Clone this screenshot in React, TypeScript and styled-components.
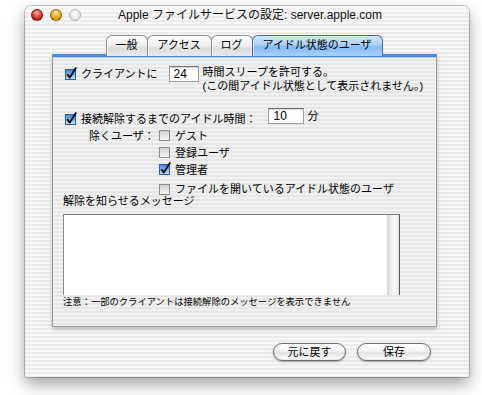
import React from "react";
import styled, { createGlobalStyle } from "styled-components";

const stripes = (a: string, b: string) =>
  `repeating-linear-gradient(to bottom, ${a} 0px, ${a} 2px, ${b} 2px, ${b} 4px)`;

const GlobalStyle = createGlobalStyle`
  html, body { margin: 0; padding: 0; background: #ffffff; }
  body {
    font-family: "Liberation Sans", "Noto Sans CJK JP", sans-serif;
    color: #000;
    -webkit-font-smoothing: antialiased;
  }
`;

const Page = styled.div`
  width: 482px;
  height: 395px;
  box-sizing: border-box;
  padding: 6px 0 0 25px;
  background: #fff;
`;

const Window = styled.div`
  width: 444px;
  height: 371px;
  display: flex;
  flex-direction: column;
  background: ${stripes("#f7f7f7", "#ebebeb")};
  border-radius: 6px 6px 2px 2px;
  box-shadow: 0 0 0 1px rgba(0, 0, 0, 0.22), 0 7px 16px rgba(0, 0, 0, 0.38);
`;

const TitleBar = styled.div`
  height: 22px;
  box-sizing: border-box;
  padding-bottom: 4px;
  display: grid;
  grid-template-columns: 70px 1fr 64px;
  align-items: center;
  background: linear-gradient(to bottom, rgba(255,255,255,0.7), rgba(255,255,255,0) 40%), ${stripes("#f7f7f7", "#ebebeb")};
  border-radius: 6px 6px 0 0;
`;

const Lights = styled.div`
  display: flex;
  gap: 7px;
  padding-left: 6px;
`;

const Light = styled.span<{ $c: "red" | "yellow" | "grey" }>`
  width: 12px;
  height: 12px;
  border-radius: 50%;
  box-sizing: border-box;
  background: ${(p) =>
    p.$c === "red"
      ? "radial-gradient(circle at 50% 30%, #ffd0c8 0, #f0625a 30%, #b51d17 75%, #8a120e 100%)"
      : p.$c === "yellow"
      ? "radial-gradient(circle at 50% 30%, #fff2c0 0, #f6bb38 35%, #d98a0b 80%, #b56d05 100%)"
      : "radial-gradient(circle at 50% 35%, #ffffff 0, #f0f0f0 40%, #d2d2d2 100%)"};
  border: 1px solid ${(p) => (p.$c === "grey" ? "#b5b5b5" : "rgba(0,0,0,0.35)")};
`;

const Title = styled.div`
  text-align: center;
  font-size: 12px;
  line-height: 14px;
  white-space: nowrap;
  color: #111;
`;

const Body = styled.div`
  flex: 1;
  display: flex;
  flex-direction: column;
  padding: 7px 32px 0 27px;
`;

const TabBar = styled.div`
  display: flex;
  justify-content: center;
  height: 20px;
  position: relative;
  z-index: 1;
  margin-bottom: -1px;
`;

const Tab = styled.div<{ $w: number; $active?: boolean }>`
  width: ${(p) => p.$w}px;
  height: 21px;
  box-sizing: border-box;
  display: flex;
  align-items: center;
  justify-content: center;
  font-size: 11px;
  line-height: 12px;
  padding-bottom: 2px;
  border: 1px solid ${(p) => (p.$active ? "#3f6fb6" : "#8f8f8f")};
  border-bottom: none;
  border-radius: 6px 6px 0 0;
  margin-left: -1px;
  background: ${(p) =>
    p.$active
      ? "linear-gradient(to bottom, #d4e8fc 0%, #a9cff6 45%, #86bbf2 55%, #a6d0f8 100%)"
      : "linear-gradient(to bottom, #fdfdfd 0%, #eeeeee 50%, #dcdcdc 60%, #e9e9e9 100%)"};
  box-shadow: inset 1px 0 0 rgba(255,255,255,0.6);
`;

const Pane = styled.div`
  height: 273px;
  box-sizing: border-box;
  display: flex;
  flex-direction: column;
  padding: 9px 0 0 10px;
  border: 1px solid #9b9b9b;
  border-top: 3px solid #4f8ad9;
  background: ${stripes("#f1f1f1", "#e6e6e6")};
  box-shadow: 0 2px 4px rgba(0, 0, 0, 0.25), inset 0 1px 0 #a9cbf3;
`;

const Row = styled.div<{ $h: number }>`
  display: flex;
  align-items: flex-start;
  margin-left: 2px;
  min-height: ${(p) => p.$h}px;
`;

const CheckLabel = styled.label<{ $top?: number }>`
  display: flex;
  align-items: center;
  gap: 3px;
  height: 16px;
  margin-top: ${(p) => p.$top ?? 0}px;
  font-size: 11px;
  line-height: 12px;
  white-space: nowrap;
`;

const Field = styled.div<{ $w: number; $ml: number }>`
  width: ${(p) => p.$w}px;
  height: 16px;
  margin-left: ${(p) => p.$ml}px;
  box-sizing: border-box;
  padding: 1px 0 0 4px;
  background: #fff;
  border: 1px solid #9c9c9c;
  border-top-color: #6e6e6e;
  box-shadow: inset 0 1px 1px rgba(0, 0, 0, 0.15);
  font-size: 12px;
  line-height: 13px;
`;

const Text = styled.div<{ $ml: number; $mt?: number }>`
  margin-left: ${(p) => p.$ml}px;
  margin-top: ${(p) => p.$mt ?? 0}px;
  font-size: 11px;
  line-height: 14px;
  white-space: nowrap;
`;

const ExcludeGrid = styled.div`
  display: grid;
  grid-template-columns: 70px auto;
  grid-auto-rows: 17px;
  align-items: center;
  margin-left: 26px;
  font-size: 11px;
  line-height: 12px;
`;

const ExcludeLabel = styled.div`
  white-space: nowrap;
`;

const GridCheck = styled.label<{ $col?: number; $mt?: number }>`
  grid-column: 2;
  display: flex;
  align-items: center;
  gap: 3px;
  margin-top: ${(p) => p.$mt ?? 0}px;
  white-space: nowrap;
`;

const Caption = styled.div<{ $size: number; $mt: number }>`
  font-size: ${(p) => p.$size}px;
  line-height: 12px;
  margin-top: ${(p) => p.$mt}px;
  white-space: nowrap;
`;

const MessageBox = styled.div`
  width: 337px;
  height: 81px;
  margin-top: 7px;
  box-sizing: border-box;
  display: flex;
  border-top: 1px solid #7b7b7b;
  border-left: 1px solid #8a8a8a;
  border-right: 1px solid #5c5c5c;
`;

const MessageArea = styled.div`
  flex: 1;
  background: #fff;
`;

const ScrollTrack = styled.div`
  width: 12px;
  background: linear-gradient(to right, #d2d2d2 0%, #ececec 30%, #fbfbfb 60%, #f0f0f0 85%, #dcdcdc 100%);
`;

const ButtonRow = styled.div`
  display: flex;
  justify-content: flex-end;
  gap: 11px;
  margin-top: 16px;
  margin-right: 6px;
`;

const Button = styled.button<{ $w: number }>`
  width: ${(p) => p.$w}px;
  height: 18px;
  padding: 0;
  border-radius: 9px;
  border: 1px solid #6d6d6d;
  background: linear-gradient(to bottom, #ffffff 0%, #f4f4f4 45%, #e2e2e2 55%, #f6f6f6 85%, #ffffff 100%);
  box-shadow: 0 1px 2px rgba(0, 0, 0, 0.3), inset 0 -1px 1px rgba(0,0,0,0.08);
  font-family: "Liberation Sans", "Noto Sans CJK JP", sans-serif;
  font-size: 11px;
  line-height: 12px;
  color: #000;
`;

function Box({ checked }: { checked?: boolean }) {
  return (
    <svg width="13" height="13" viewBox="0 0 13 13" style={{ flex: "none", overflow: "visible" }}>
      <defs>
        <linearGradient id="boxOff" x1="0" y1="0" x2="0" y2="1">
          <stop offset="0" stopColor="#cfcfcf" />
          <stop offset="0.5" stopColor="#e4e4e4" />
          <stop offset="1" stopColor="#fbfbfb" />
        </linearGradient>
        <linearGradient id="boxOn" x1="0" y1="0" x2="0" y2="1">
          <stop offset="0" stopColor="#3f83d8" />
          <stop offset="0.5" stopColor="#7cb3ef" />
          <stop offset="1" stopColor="#cfe5fb" />
        </linearGradient>
      </defs>
      <rect
        x="0.5"
        y="1.5"
        width="10"
        height="10"
        fill={checked ? "url(#boxOn)" : "url(#boxOff)"}
        stroke={checked ? "#2f5f9e" : "#8c8c8c"}
      />
      {checked && (
        <path d="M2.3 6.2 L4.8 9.6 L11.2 -0.6" fill="none" stroke="#0b0b0b" strokeWidth="1.9" strokeLinejoin="round" />
      )}
    </svg>
  );
}

export default function App() {
  return (
    <Page>
      <GlobalStyle />
      <Window>
        <TitleBar>
          <Lights>
            <Light $c="red" />
            <Light $c="yellow" />
            <Light $c="grey" />
          </Lights>
          <Title>Apple ファイルサービスの設定: server.apple.com</Title>
          <span />
        </TitleBar>
        <Body>
          <TabBar>
            <Tab $w={42}>一般</Tab>
            <Tab $w={65}>アクセス</Tab>
            <Tab $w={42}>ログ</Tab>
            <Tab $w={131} $active>
              アイドル状態のユーザ
            </Tab>
          </TabBar>
          <Pane>
            <Row $h={27}>
              <CheckLabel>
                <Box checked />
                クライアントに
              </CheckLabel>
              <Field $w={30} $ml={11}>24</Field>
              <Text $ml={4} $mt={-1}>
                時間スリープを許可する。
                <br />
                (この間アイドル状態として表示されません。)
              </Text>
            </Row>
            <Row $h={19} style={{ marginTop: 15 }}>
              <CheckLabel $top={3}>
                <Box checked />
                接続解除するまでのアイドル時間：
              </CheckLabel>
              <Field $w={36} $ml={12}>10</Field>
              <Text $ml={3} $mt={1}>分</Text>
            </Row>
            <ExcludeGrid>
              <ExcludeLabel>除くユーザ：</ExcludeLabel>
              <GridCheck>
                <Box />
                ゲスト
              </GridCheck>
              <GridCheck>
                <Box />
                登録ユーザ
              </GridCheck>
              <GridCheck>
                <Box checked />
                管理者
              </GridCheck>
              <GridCheck $mt={5}>
                <Box />
                ファイルを開いているアイドル状態のユーザ
              </GridCheck>
            </ExcludeGrid>
            <Caption $size={11} $mt={0}>解除を知らせるメッセージ</Caption>
            <MessageBox>
              <MessageArea />
              <ScrollTrack />
            </MessageBox>
            <Caption $size={9.3} $mt={1}>注意：一部のクライアントは接続解除のメッセージを表示できません</Caption>
          </Pane>
          <ButtonRow>
            <Button $w={73}>元に戻す</Button>
            <Button $w={74}>保存</Button>
          </ButtonRow>
        </Body>
      </Window>
    </Page>
  );
}
